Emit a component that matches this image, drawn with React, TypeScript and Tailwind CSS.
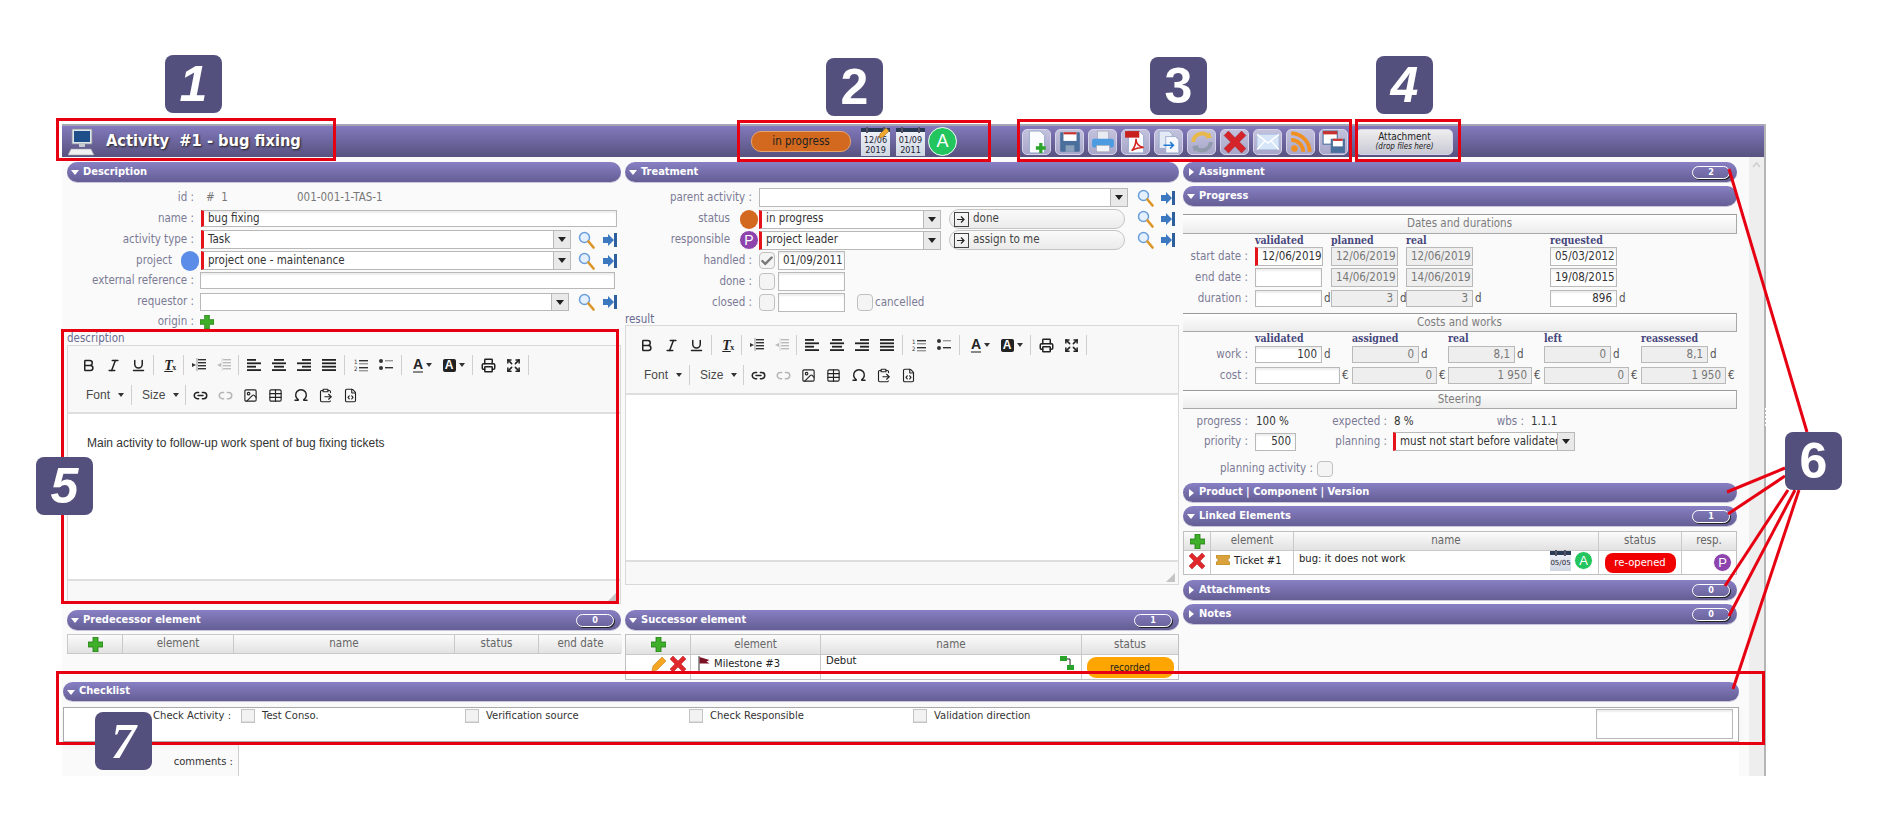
import { ReactNode } from 'react';
import { Bold, Italic, Underline, Printer, Expand, Link2, Unlink2, Image, Table, Omega, ClipboardPaste, FileCode, Check } from 'lucide-react';

const labelCls = 'text-[#7a7a96] text-right whitespace-nowrap';

function Arrow({ open }: { open?: boolean }) {
  return (
    <svg width="8" height="8" viewBox="0 0 8 8" className="shrink-0">
      {open ? <path d="M0 2h8L4 7z" fill="#fff" /> : <path d="M2 0v8l5-4z" fill="#fff" />}
    </svg>
  );
}

function Section({ title, open, badge, h = 20, className = '' }: { title: string; open?: boolean; badge?: string; h?: number; className?: string }) {
  return (
    <div style={{ height: h }} className={`rounded-[10px] bg-gradient-to-b from-[#8880c4] to-[#645e94] flex items-center pl-[4px] text-white font-bold text-[11px] shadow-[0_1px_0_#c8c6dc] ${className}`}>
      <Arrow open={open} />
      <span className="ml-[4px] whitespace-nowrap">{title}</span>
      {badge && (
        <span className="ml-auto mr-[7px] w-[38px] h-[13px] rounded-full border border-white shadow-[1px_1px_0_#222] flex items-center justify-center text-[9px] leading-none">
          {badge}
        </span>
      )}
    </div>
  );
}

function Input({ value = '', w, h = 19, req, right, disabled, className = '' }: { value?: string; w: number; h?: number; req?: boolean; right?: boolean; disabled?: boolean; className?: string }) {
  return (
    <div
      style={{ width: w, height: h }}
      className={`shrink-0 border border-[#b9b9b9] flex items-center px-[4px] whitespace-nowrap overflow-hidden text-[#333] ${disabled ? 'bg-[#eeeeee] text-[#777]' : 'bg-white shadow-[inset_0_2px_2px_#eee]'} ${req ? 'border-l-[3px] border-l-[#e5141a]' : ''} ${right ? 'justify-end' : ''} ${className}`}
    >
      {value}
    </div>
  );
}

function Select({ value = '', w, h = 19, req }: { value?: string; w: number; h?: number; req?: boolean }) {
  return (
    <div style={{ width: w, height: h }} className={`shrink-0 border border-[#b9b9b9] bg-white flex items-center text-[#333] ${req ? 'border-l-[3px] border-l-[#e5141a]' : ''}`}>
      <span className="flex-1 px-[4px] overflow-hidden whitespace-nowrap">{value}</span>
      <span className="w-[17px] h-full bg-[#e9e9e9] border-l border-[#b9b9b9] flex items-center justify-center shrink-0">
        <svg width="8" height="5" viewBox="0 0 8 5"><path d="M0 0h8L4 5z" fill="#222" /></svg>
      </span>
    </div>
  );
}

function Search() {
  return (
    <svg width="17" height="18" viewBox="0 0 17 18" className="shrink-0">
      <circle cx="6.5" cy="6.5" r="5" fill="#e4f0ff" stroke="#6a9fda" strokeWidth="1.5" />
      <path d="M10.5 10.5l5 6" stroke="#dc9526" strokeWidth="2.6" strokeLinecap="round" />
    </svg>
  );
}

function Goto() {
  return (
    <svg width="14" height="14" viewBox="0 0 14 14" className="shrink-0">
      <path d="M0 4h5V1l6 6-6 6v-3H0z" fill="#3b78c0" />
      <rect x="11" y="0" width="3" height="14" fill="#2d5f9e" />
    </svg>
  );
}

function Tools({ gap = 8 }: { gap?: number }) {
  return (
    <span className="flex items-center shrink-0" style={{ gap }}>
      <Search />
      <Goto />
    </span>
  );
}

function Plus({ size = 15 }: { size?: number }) {
  return (
    <svg width={size} height={size} viewBox="0 0 15 15" className="shrink-0">
      <path d="M5 0h5v5h5v5h-5v5H5v-5H0V5h5z" fill="#3fae29" stroke="#237a16" strokeWidth="0.8" />
    </svg>
  );
}

function Cross({ size = 16 }: { size?: number }) {
  return (
    <svg width={size} height={size} viewBox="0 0 16 16" className="shrink-0">
      <path d="M3 0l5 5 5-5 3 3-5 5 5 5-3 3-5-5-5 5-3-3 5-5-5-5z" fill="#e0272b" stroke="#b21a1e" strokeWidth="0.5" />
    </svg>
  );
}

function Avatar({ letter, bg, size = 29, text = 18 }: { letter: string; bg: string; size?: number; text?: number }) {
  return (
    <span
      style={{ width: size, height: size, background: bg, fontSize: text }}
      className="rounded-full border border-white shrink-0 flex items-center justify-center text-white font-['Liberation_Sans',sans-serif]"
    >
      {letter}
    </span>
  );
}

function Calendar({ lines, pen, small }: { lines: string[]; pen?: boolean; small?: boolean }) {
  return (
    <span className={`relative shrink-0 flex flex-col items-center justify-end bg-gradient-to-b from-[#f4f6fa] to-[#cfd7e2] text-[#223] leading-[10px] ${small ? 'w-[21px] h-[20px] text-[7px] pb-[3px]' : 'w-[29px] h-[28px] text-[9px] pb-[1px]'}`}>
      <span className="absolute top-0 left-0 right-0 h-[4px] bg-[#2b3a55]" />
      <span className="absolute top-[-1px] left-[5px] w-[2px] h-[6px] bg-white border-x border-[#556]" />
      <span className="absolute top-[-1px] right-[5px] w-[2px] h-[6px] bg-white border-x border-[#556]" />
      {lines.map((l) => <span key={l}>{l}</span>)}
      {pen && (
        <svg width="12" height="12" viewBox="0 0 12 12" className="absolute -top-[1px] right-0">
          <path d="M1 11l1-4 6-6 3 3-6 6z" fill="#f0a830" stroke="#a8691a" strokeWidth="0.6" />
        </svg>
      )}
    </span>
  );
}

function ToolButton({ children }: { children: ReactNode }) {
  return (
    <span className="w-[29px] h-[26px] rounded-[5px] border border-[#d5d3ea] bg-gradient-to-b from-[#c3c2dd] to-[#a8a6c9] flex items-center justify-center shrink-0">
      <svg width="24" height="24" viewBox="0 0 22 22">{children}</svg>
    </span>
  );
}

const Page = (
  <path d="M4 1h10l4 4v16H4z" fill="#fbfcff" stroke="#8fa2c4" strokeWidth="0.8" />
);

function Bars({ rows }: { rows: [number, number][] }) {
  return (
    <svg width="14" height="14" viewBox="0 0 14 14">
      {rows.map(([x, w], i) => <rect key={i} x={x} y={1 + i * 3.4} width={w} height="1.8" fill="#222" />)}
    </svg>
  );
}

function Btn({ children, w = 25, className = '' }: { children: ReactNode; w?: number; className?: string }) {
  return <span style={{ width: w }} className={`h-[20px] flex items-center justify-center shrink-0 text-[#222] ${className}`}>{children}</span>;
}

function Sep({ m = 2 }: { m?: number }) {
  return <span style={{ marginLeft: m, marginRight: m }} className="w-px h-[20px] bg-[#cfcfcf] shrink-0" />;
}

function Caret() {
  return <svg width="6" height="4" viewBox="0 0 6 4" className="shrink-0"><path d="M0 0h6L3 4z" fill="#333" /></svg>;
}

function IndentIcon({ out }: { out?: boolean }) {
  const c = out ? '#bbb' : '#333';
  return (
    <svg width="14" height="14" viewBox="0 0 14 14">
      {[1, 4, 7, 10].map((y) => <rect key={y} x="6" y={y} width="8" height="1.4" fill={c} />)}
      <rect x="4.5" y="0" width="1" height="13" fill={c} opacity="0.5" />
      <path d={out ? 'M4 5L0 7l4 2z' : 'M0 5l4 2-4 2z'} fill={c} />
    </svg>
  );
}

function EditorToolbar({ h }: { h: number }) {
  const ic = { size: 15, strokeWidth: 2.4 };
  const ig = { size: 15, strokeWidth: 1.8 };
  return (
    <div style={{ height: h }} className="bg-[#f8f8f8] border-b-2 border-[#dedede] pl-[8px] pt-[9px]">
      <div className="flex items-center h-[20px]">
        <Btn><Bold {...ic} /></Btn>
        <Btn><Italic {...ic} /></Btn>
        <Btn><Underline {...ic} /></Btn>
        <Sep />
        <Btn><span className="relative italic font-bold text-[14px] font-['Liberation_Serif',serif] underline">T<span className="absolute left-[8px] top-[7px] text-[8px] not-italic no-underline">x</span></span></Btn>
        <Sep />
        <Btn><IndentIcon /></Btn>
        <Btn><IndentIcon out /></Btn>
        <Sep />
        <Btn><Bars rows={[[0, 9], [0, 14], [0, 9], [0, 14]]} /></Btn>
        <Btn><Bars rows={[[2, 10], [0, 14], [2, 10], [0, 14]]} /></Btn>
        <Btn><Bars rows={[[5, 9], [0, 14], [5, 9], [0, 14]]} /></Btn>
        <Btn><Bars rows={[[0, 14], [0, 14], [0, 14], [0, 14]]} /></Btn>
        <Sep m={3} />
        <Btn>
          <svg width="14" height="14" viewBox="0 0 14 14">
            <text x="0" y="6" fontSize="6" fill="#333">1</text>
            <text x="0" y="13" fontSize="6" fill="#333">2</text>
            <rect x="5" y="2" width="9" height="1.4" fill="#333" />
            <rect x="5" y="5" width="9" height="1.4" fill="#999" />
            <rect x="5" y="9" width="9" height="1.4" fill="#333" />
            <rect x="5" y="12" width="9" height="1.4" fill="#999" />
          </svg>
        </Btn>
        <Btn>
          <svg width="14" height="14" viewBox="0 0 14 14">
            <circle cx="2" cy="3" r="2" fill="#333" />
            <circle cx="2" cy="10" r="2" fill="#333" />
            <rect x="6" y="2" width="8" height="1.4" fill="#999" />
            <rect x="6" y="9" width="8" height="1.4" fill="#333" />
          </svg>
        </Btn>
        <Sep m={3} />
        <Btn w={33} className="gap-[3px] pl-[2px]">
          <span className="font-bold text-[14px] leading-[13px] border-b-2 border-[#888] font-['Liberation_Sans',sans-serif]">A</span>
          <Caret />
        </Btn>
        <Btn w={31} className="gap-[3px]">
          <span className="bg-[#222] text-white rounded-[2px] font-bold text-[12px] leading-[13px] w-[13px] text-center font-['Liberation_Sans',sans-serif]">A</span>
          <Caret />
        </Btn>
        <Sep m={3} />
        <Btn><Printer {...ic} /></Btn>
        <Btn><Expand {...ic} /></Btn>
        <Sep />
      </div>
      <div className="flex items-center h-[20px] mt-[10px] text-[12px] text-[#484848] font-['Liberation_Sans',sans-serif]">
        <span className="w-[53px] pl-[10px] flex items-center gap-[8px] shrink-0">Font <Caret /></span>
        <Sep />
        <span className="w-[49px] pl-[8px] flex items-center gap-[8px] shrink-0">Size <Caret /></span>
        <Sep />
        <Btn><Link2 {...ic} /></Btn>
        <Btn className="opacity-30"><Unlink2 {...ic} /></Btn>
        <Btn><Image {...ig} /></Btn>
        <Btn><Table {...ig} /></Btn>
        <Btn><Omega size={16} strokeWidth={2.2} /></Btn>
        <Btn><ClipboardPaste {...ig} /></Btn>
        <Btn><FileCode {...ig} /></Btn>
      </div>
    </div>
  );
}

function Editor({ text, toolbarH, bodyH, footH }: { text?: string; toolbarH: number; bodyH: number; footH: number }) {
  return (
    <div className="border border-[#d9d9d9] bg-[#f8f8f8]">
      <EditorToolbar h={toolbarH} />
      <div style={{ height: bodyH }} className="bg-white pl-[19px] pt-[20px] text-[12px] text-[#333] font-['Liberation_Sans',sans-serif]">{text}</div>
      <div style={{ height: footH }} className="relative border-t-2 border-[#dedede] bg-[#f8f8f8]">
        <span className="absolute right-[3px] bottom-[2px] w-0 h-0 border-l-[9px] border-l-transparent border-b-[9px] border-b-[#c4c4c4]" />
      </div>
    </div>
  );
}

function Checkbox({ checked, size = 16, h }: { checked?: boolean; size?: number; h?: number }) {
  return (
    <span style={{ width: size, height: h ?? size }} className="shrink-0 rounded-[4px] border border-[#c0c0c0] bg-[#f4f4f4] flex items-center justify-center">
      {checked && <Check size={14} strokeWidth={4} className="text-[#777]" />}
    </span>
  );
}

function Transition({ label }: { label: string }) {
  return (
    <div className="w-[176px] h-[20px] rounded-[10px] border border-[#c4c4c4] bg-gradient-to-b from-[#fafafa] to-[#ebebeb] flex items-center pl-[4px] gap-[4px] shrink-0 text-[#444]">
      <svg width="15" height="15" viewBox="0 0 15 15">
        <rect x="0.5" y="0.5" width="14" height="14" fill="none" stroke="#444" />
        <path d="M3 7.5h6M7 4.5l3 3-3 3" stroke="#222" strokeWidth="1.2" fill="none" />
      </svg>
      {label}
    </div>
  );
}

function Band({ title, h = 20, className = '' }: { title: string; h?: number; className?: string }) {
  return (
    <div style={{ height: h }} className={`border-t border-b border-r border-[#a8a8a8] border-t-[#999] bg-gradient-to-b from-white to-[#ececec] flex items-center justify-center text-[#7d7d7d] ${className}`}>
      {title}
    </div>
  );
}

function Th({ children, className = '' }: { children?: ReactNode; className?: string }) {
  return <div className={`flex items-center justify-center border-r border-[#c9c9c9] text-[#666] bg-gradient-to-b from-[#fbfbfb] to-[#e2e2e2] h-full ${className}`}>{children}</div>;
}

function DescriptionCol() {
  return (
    <div className="w-[554px] shrink-0">
      <Section title="Description" open />
      <div className="flex h-[14px] mt-[9px] items-center">
        <span className={`${labelCls} w-[127px]`}>id :</span>
        <span className="ml-[12px] w-[91px] text-[#777]">#&nbsp;&nbsp;1</span>
        <span className="text-[#777]">001-001-1-TAS-1</span>
      </div>
      <div className="flex items-center mt-[5px] h-[17px]">
        <span className={`${labelCls} w-[127px]`}>name :</span>
        <Input w={416} h={17} req value="bug fixing" className="ml-[7px]" />
      </div>
      <div className="flex items-center mt-[3px] h-[19px]">
        <span className={`${labelCls} w-[127px]`}>activity type :</span>
        <div className="ml-[7px]"><Select w={370} req value="Task" /></div>
        <span className="ml-[7px]"><Tools /></span>
      </div>
      <div className="flex items-center mt-[2px] h-[19px]">
        <span className={`${labelCls} w-[105px]`}>project</span>
        <span className="ml-[9px] w-[18px] h-[20px] rounded-full bg-[#5b8de8] shrink-0" />
        <div className="ml-[2px]"><Select w={370} req value="project one - maintenance" /></div>
        <span className="ml-[7px]"><Tools /></span>
      </div>
      <div className="flex items-center mt-[2px] h-[17px]">
        <span className={`${labelCls} w-[127px]`}>external reference :</span>
        <Input w={415} h={17} className="ml-[6px]" />
      </div>
      <div className="flex items-center mt-[4px] h-[18px]">
        <span className={`${labelCls} w-[127px]`}>requestor :</span>
        <div className="ml-[6px]"><Select w={369} h={18} /></div>
        <span className="ml-[9px]"><Tools /></span>
      </div>
      <div className="flex items-center mt-[5px] h-[12px]">
        <span className={`${labelCls} w-[127px]`}>origin :</span>
        <span className="ml-[6px]"><Plus size={14} /></span>
      </div>
      <div className="mt-[4px] h-[13px] leading-[13px] text-[#6a6a90]">description</div>
      <Editor text="Main activity to follow-up work spent of bug fixing tickets" toolbarH={68} bodyH={165} footH={24} />
      <Section title="Predecessor element" open badge="0" className="mt-[6px]" />
      <div className="mt-[4px] h-[20px] grid grid-cols-[55px_111px_221px_84px_83px] border border-[#c9c9c9]">
        <Th><Plus /></Th>
        <Th>element</Th>
        <Th>name</Th>
        <Th>status</Th>
        <Th className="border-r-0">end date</Th>
      </div>
    </div>
  );
}

function TreatmentCol() {
  return (
    <div className="w-[554px] shrink-0">
      <Section title="Treatment" open />
      <div className="flex items-center mt-[6px] h-[19px]">
        <span className={`${labelCls} w-[127px]`}>parent activity :</span>
        <div className="ml-[7px]"><Select w={369} /></div>
        <span className="ml-[9px]"><Tools gap={7} /></span>
      </div>
      <div className="flex items-center mt-[2px] h-[20px]">
        <span className={`${labelCls} w-[105px]`}>status</span>
        <span className="ml-[10px] w-[18px] h-[19px] rounded-full bg-[#d2691e] shrink-0" />
        <div className="ml-[1px]"><Select w={182} req value="in progress" /></div>
        <span className="ml-[8px]"><Transition label="done" /></span>
        <span className="ml-[12px]"><Tools gap={7} /></span>
      </div>
      <div className="flex items-center mt-[1px] h-[20px]">
        <span className={`${labelCls} w-[105px]`}>responsible</span>
        <span className="ml-[9px]"><Avatar letter="P" bg="#8e44ad" size={20} text={14} /></span>
        <div className="ml-[0px]"><Select w={182} req value="project leader" /></div>
        <span className="ml-[8px]"><Transition label="assign to me" /></span>
        <span className="ml-[12px]"><Tools gap={7} /></span>
      </div>
      <div className="flex items-center mt-[1px] h-[19px]">
        <span className={`${labelCls} w-[127px] text-[#5f5f8f]`}>handled :</span>
        <span className="ml-[7px]"><Checkbox checked h={17} /></span>
        <Input w={67} value="01/09/2011" className="ml-[3px]" />
      </div>
      <div className="flex items-center mt-[2px] h-[19px]">
        <span className={`${labelCls} w-[127px]`}>done :</span>
        <span className="ml-[7px]"><Checkbox h={17} /></span>
        <Input w={67} className="ml-[3px]" />
      </div>
      <div className="flex items-center mt-[2px] h-[19px]">
        <span className={`${labelCls} w-[127px]`}>closed :</span>
        <span className="ml-[7px]"><Checkbox h={17} /></span>
        <Input w={67} className="ml-[3px]" />
        <span className="ml-[12px]"><Checkbox h={17} /></span>
        <span className="ml-[2px] text-[#7a7a96]">cancelled</span>
      </div>
      <div className="mt-[1px] h-[12px] leading-[12px] text-[#6a6a90]">result</div>
      <Editor toolbarH={69} bodyH={165} footH={24} />
      <Section title="Successor element" open badge="1" className="mt-[25px]" />
      <div className="mt-[4px] border border-[#c0c0c0] bg-white">
        <div className="h-[20px] grid grid-cols-[65px_130px_261px_96px] border-b border-[#c9c9c9]">
          <Th><Plus /></Th>
          <Th>element</Th>
          <Th>name</Th>
          <Th className="border-r-0">status</Th>
        </div>
        <div className="h-[24px] grid grid-cols-[65px_130px_261px_96px] text-[10px] text-[#222] font-stretch-normal">
          <div className="flex items-start pt-[1px] justify-end pr-[4px] gap-[3px] border-r border-[#c9c9c9]">
            <svg width="16" height="16" viewBox="0 0 16 16"><path d="M1 15l1-5L11 1l4 4-9 9z" fill="#f5a623" stroke="#c77d16" strokeWidth="0.6" /></svg>
            <Cross />
          </div>
          <div className="flex items-start pt-[1px] pl-[7px] gap-[4px] border-r border-[#c9c9c9]">
            <svg width="12" height="16" viewBox="0 0 12 16"><path d="M1 0v16" stroke="#333" /><path d="M1.5 1l10 3-3 1.5 3 2-10 0z" fill="#7a1224" /></svg>
            <span>Milestone #3</span>
          </div>
          <div className="flex items-start justify-between pl-[5px] pr-[7px] leading-[12px] border-r border-[#c9c9c9]">
            <span>Debut</span>
            <svg width="14" height="14" viewBox="0 0 14 14" className="mt-[1px]">
              <rect x="0" y="0" width="7" height="5" fill="#29a329" /><rect x="7" y="9" width="7" height="5" fill="#29a329" />
              <path d="M7 3h3v6" stroke="#222" fill="none" />
            </svg>
          </div>
          <div className="flex items-center justify-center">
            <span className="w-[87px] h-[21px] rounded-[9px] bg-[#ffa500] flex items-center justify-center text-[#222] font-stretch-condensed">recorded</span>
          </div>
        </div>
      </div>
    </div>
  );
}

function ProgressCol() {
  const dates = 'grid grid-cols-[72px_76px_75px_144px_1fr]';
  const costs = 'grid grid-cols-[72px_97px_96px_96px_97px_1fr]';
  const head = 'font-bold text-[#46467c] leading-[13px] font-["DejaVu_Serif",serif] text-[10.5px]';
  const Unit = ({ u }: { u: string }) => <span className="ml-[2px] text-[#555]">{u}</span>;
  return (
    <div className="w-[554px] shrink-0">
      <Section title="Assignment" badge="2" />
      <Section title="Progress" open className="mt-[4px]" />
      <Band title="Dates and durations" className="mt-[8px]" />
      <div className={`${dates} h-[13px] ${head}`}>
        <span /><span>validated</span><span>planned</span><span>real</span><span>requested</span>
      </div>
      <div className={`${dates} items-center h-[19px]`}>
        <span className={`${labelCls} pr-[7px]`}>start date :</span>
        <Input w={68} req value="12/06/2019" />
        <Input w={67} disabled value="12/06/2019" />
        <Input w={67} disabled value="12/06/2019" />
        <Input w={67} value="05/03/2012" />
      </div>
      <div className={`${dates} items-center mt-[2px] h-[19px]`}>
        <span className={`${labelCls} pr-[7px]`}>end date :</span>
        <Input w={67} />
        <Input w={67} disabled value="14/06/2019" />
        <Input w={67} disabled value="14/06/2019" />
        <Input w={67} value="19/08/2015" />
      </div>
      <div className={`${dates} items-center mt-[3px] h-[17px]`}>
        <span className={`${labelCls} pr-[7px]`}>duration :</span>
        <span className="flex items-center"><Input w={67} h={17} /><Unit u="d" /></span>
        <span className="flex items-center"><Input w={67} h={17} disabled right value="3" /><Unit u="d" /></span>
        <span className="flex items-center"><Input w={67} h={17} disabled right value="3" /><Unit u="d" /></span>
        <span className="flex items-center"><Input w={67} h={17} right value="896" /><Unit u="d" /></span>
      </div>
      <Band title="Costs and works" h={19} className="mt-[6px]" />
      <div className={`${costs} h-[14px] ${head}`}>
        <span /><span>validated</span><span>assigned</span><span>real</span><span>left</span><span>reassessed</span>
      </div>
      <div className={`${costs} items-center h-[17px]`}>
        <span className={`${labelCls} pr-[7px]`}>work :</span>
        <span className="flex items-center"><Input w={67} h={17} right value="100" /><Unit u="d" /></span>
        <span className="flex items-center"><Input w={67} h={17} disabled right value="0" /><Unit u="d" /></span>
        <span className="flex items-center"><Input w={67} h={17} disabled right value="8,1" /><Unit u="d" /></span>
        <span className="flex items-center"><Input w={67} h={17} disabled right value="0" /><Unit u="d" /></span>
        <span className="flex items-center"><Input w={67} h={17} disabled right value="8,1" /><Unit u="d" /></span>
      </div>
      <div className={`${costs} items-center mt-[4px] h-[17px]`}>
        <span className={`${labelCls} pr-[7px]`}>cost :</span>
        <span className="flex items-center"><Input w={85} h={17} /><Unit u="€" /></span>
        <span className="flex items-center"><Input w={85} h={17} disabled right value="0" /><Unit u="€" /></span>
        <span className="flex items-center"><Input w={84} h={17} disabled right value="1 950" /><Unit u="€" /></span>
        <span className="flex items-center"><Input w={85} h={17} disabled right value="0" /><Unit u="€" /></span>
        <span className="flex items-center"><Input w={85} h={17} disabled right value="1 950" /><Unit u="€" /></span>
      </div>
      <Band title="Steering" h={19} className="mt-[6px]" />
      <div className="flex items-center h-[13px] mt-[6px] text-[#333]">
        <span className={`${labelCls} w-[65px]`}>progress :</span>
        <span className="ml-[8px] w-[61px]">100 %</span>
        <span className={`${labelCls} w-[70px]`}>expected :</span>
        <span className="ml-[7px] w-[30px]">8 %</span>
        <span className={`${labelCls} w-[100px]`}>wbs :</span>
        <span className="ml-[7px]">1.1.1</span>
      </div>
      <div className="flex items-center h-[19px] mt-[4px]">
        <span className={`${labelCls} w-[65px]`}>priority :</span>
        <Input w={41} h={18} right value="500" className="ml-[7px]" />
        <span className={`${labelCls} w-[91px]`}>planning :</span>
        <div className="ml-[6px]"><Select w={182} req value="must not start before validated" /></div>
      </div>
      <div className="flex items-center h-[16px] mt-[10px]">
        <span className={`${labelCls} w-[130px]`}>planning activity :</span>
        <span className="ml-[4px]"><Checkbox /></span>
      </div>
      <Section title="Product | Component | Version" h={19} className="mt-[6px]" />
      <Section title="Linked Elements" open badge="1" className="mt-[4px]" />
      <div className="mt-[5px] border border-[#c0c0c0] bg-white">
        <div className="h-[19px] grid grid-cols-[27px_83px_305px_83px_54px] border-b border-[#c9c9c9]">
          <Th><Plus /></Th>
          <Th>element</Th>
          <Th>name</Th>
          <Th>status</Th>
          <Th className="border-r-0">resp.</Th>
        </div>
        <div className="h-[23px] grid grid-cols-[27px_83px_305px_83px_54px] text-[10px] text-[#222] font-stretch-normal">
          <div className="flex justify-center pt-[2px] border-r border-[#c9c9c9]"><Cross /></div>
          <div className="flex items-start pt-[2px] pl-[5px] gap-[4px] border-r border-[#c9c9c9]">
            <svg width="14" height="10" viewBox="0 0 14 10" className="mt-[2px]"><path d="M0 0h14v3a2 2 0 000 4v3H0V7a2 2 0 000-4z" fill="#d9a23a" stroke="#a97d25" strokeWidth="0.5" /></svg>
            <span className="whitespace-nowrap">Ticket #1</span>
          </div>
          <div className="flex items-start pl-[5px] pr-[5px] border-r border-[#c9c9c9]">
            <span className="flex-1">bug: it does not work</span>
            <Calendar small lines={['05/05']} />
            <span className="ml-[3px]"><Avatar letter="A" bg="#22c55e" size={19} text={13} /></span>
          </div>
          <div className="flex items-center justify-center border-r border-[#c9c9c9]">
            <span className="w-[71px] h-[20px] rounded-[8px] bg-[#f00000] text-white flex items-center justify-center">re-opened</span>
          </div>
          <div className="flex items-center justify-end pr-[4px]"><Avatar letter="P" bg="#8e44ad" size={19} text={13} /></div>
        </div>
      </div>
      <Section title="Attachments" badge="0" className="mt-[5px]" />
      <Section title="Notes" badge="0" className="mt-[4px]" />
    </div>
  );
}

function CheckItem({ label }: { label: string }) {
  return (
    <div className="w-[224px] shrink-0 flex items-start gap-[7px]">
      <span className="w-[14px] h-[14px] border border-[#c4c4c4] bg-[#f2f2f2] shadow-[inset_0_-1px_0_#ddd] shrink-0" />
      <span className="text-[10px] text-[#333] leading-[14px] font-stretch-normal">{label}</span>
    </div>
  );
}

function Tag({ n, className }: { n: string; className: string }) {
  return (
    <div className={`absolute w-[57px] h-[58px] rounded-[8px] bg-[#54507d] flex items-center justify-center text-white font-bold text-[50px] leading-none font-['Liberation_Sans',sans-serif] ${className}`}>
      {n}
    </div>
  );
}

function RedBox({ className }: { className: string }) {
  return <div className={`absolute border-[3px] border-[#e60012] pointer-events-none ${className}`} />;
}

const lines = [
  [1729, 169, 1807, 432],
  [1727, 492, 1785, 468],
  [1728, 514, 1785, 476],
  [1725, 586, 1788, 490],
  [1729, 616, 1795, 490],
  [1733, 689, 1799, 490],
];

export default function App() {
  return (
    <div className="relative w-[1894px] h-[839px] bg-white overflow-hidden text-[11.5px] text-[#333] font-['DejaVu_Sans',sans-serif] font-stretch-condensed">
      <div className="ml-[62px] pt-[124px]">
        <div className="w-[1704px] h-[652px] border-r-2 border-[#b5b5b5] flex flex-col">
          <div className="h-[33px] shrink-0 flex items-center pl-[6px] border-t-2 border-[#a6a5b5] bg-gradient-to-b from-[#8379bd] to-[#57527f]">
            <svg width="28" height="28" viewBox="0 0 28 28" className="shrink-0">
              <rect x="4" y="1" width="20" height="15" fill="#dfe5ea" stroke="#8a8f98" strokeWidth="0.8" />
              <rect x="6" y="3" width="16" height="11" fill="#1f4f8a" />
              <rect x="11" y="16" width="6" height="3" fill="#c5cad0" />
              <path d="M3 21h20l3 6H0z" fill="#eef0f2" stroke="#9aa0a8" strokeWidth="0.6" />
            </svg>
            <div className="ml-[10px] w-[645px] shrink-0 text-white font-bold text-[16.3px] whitespace-pre [text-shadow:1px_1px_2px_#222]">
              Activity  #1 - bug fixing
            </div>
            <span className="w-[100px] h-[21px] rounded-[10px] border border-[#e6a46f] bg-[#d2691e] flex items-center justify-center text-[#222] shrink-0">in progress</span>
            <span className="ml-[10px]"><Calendar pen lines={['12/06', '2019']} /></span>
            <span className="ml-[6px]"><Calendar lines={['01/09', '2011']} /></span>
            <span className="ml-[3px]"><Avatar letter="A" bg="#22c55e" /></span>
            <div className="ml-[65px] flex gap-[4px]">
              <ToolButton>{Page}<path d="M13 12h3v3h3v3h-3v3h-3v-3h-3v-3h3z" fill="#2aa52a" /></ToolButton>
              <ToolButton><rect x="2" y="2" width="18" height="18" rx="1" fill="#4a6f9c" /><rect x="5" y="2" width="12" height="8" fill="#fff" /><rect x="5" y="2" width="12" height="2" fill="#c8322e" /><rect x="7" y="14" width="8" height="6" fill="#8aa0bb" /></ToolButton>
              <ToolButton><rect x="6" y="1" width="10" height="8" fill="#e8ecf2" stroke="#99a" strokeWidth="0.5" /><rect x="1" y="8" width="20" height="8" rx="2" fill="#4c9be0" /><rect x="5" y="14" width="12" height="6" fill="#f2f4f7" stroke="#99a" strokeWidth="0.5" /></ToolButton>
              <ToolButton>{Page}<rect x="1" y="1" width="13" height="6" fill="#c8201c" /><path d="M7 19c3-3 4-7 4-11 0 4 2 7 7 8-4 0-8 1-11 3z" fill="none" stroke="#d3231e" strokeWidth="1.4" /></ToolButton>
              <ToolButton><path d="M2 1h9l3 3v13H2z" fill="#e3e9f5" stroke="#8fa2c4" strokeWidth="0.7" /><path d="M8 6h9l3 3v12H8z" fill="#f6f8fd" stroke="#8fa2c4" strokeWidth="0.7" /><path d="M6 14h8M12 11l3 3-3 3" stroke="#1f78d1" strokeWidth="1.5" fill="none" /></ToolButton>
              <ToolButton><path d="M3 11a8 8 0 0114-5" stroke="#e8b84a" strokeWidth="3.5" fill="none" /><path d="M14 8l6-1-2-5z" fill="#e8b84a" /><path d="M19 11a8 8 0 01-14 5" stroke="#8f9bab" strokeWidth="3.5" fill="none" /><path d="M8 14l-6 1 2 5z" fill="#8f9bab" /></ToolButton>
              <ToolButton><path d="M5 1l6 6 6-6 4 4-6 6 6 6-4 4-6-6-6 6-4-4 6-6-6-6z" fill="#d4242a" stroke="#9c1a1e" strokeWidth="0.4" /></ToolButton>
              <ToolButton><rect x="1" y="4" width="20" height="14" fill="#d7e5f8" stroke="#a9c0e0" strokeWidth="0.6" /><path d="M1 4l10 8 10-8M1 18l7-8M21 18l-7-8" stroke="#fff" strokeWidth="1.3" fill="none" /></ToolButton>
              <ToolButton><circle cx="5" cy="17" r="3" fill="#f19020" /><path d="M2 9a11 11 0 0111 11M2 3a17 17 0 0117 17" stroke="#f19020" strokeWidth="3.4" fill="none" /></ToolButton>
              <ToolButton><rect x="1" y="1" width="13" height="12" fill="#fff" stroke="#4a6f9c" /><rect x="1" y="1" width="13" height="3" fill="#c8322e" /><rect x="8" y="8" width="13" height="13" fill="#4a6f9c" /><rect x="10" y="8" width="9" height="7" fill="#fff" /><rect x="10" y="8" width="9" height="2" fill="#c8322e" /></ToolButton>
            </div>
            <div className="ml-[8px] w-[97px] h-[26px] rounded-[5px] border border-[#d5d3ea] bg-gradient-to-b from-[#eeeeee] to-[#c9c9d6] flex flex-col items-center justify-center text-[#222] text-[10px] leading-[10px] shrink-0">
              <span>Attachment</span>
              <span className="italic text-[8px] leading-[9px]">(drop files here)</span>
            </div>
          </div>
          <div className="flex flex-1 min-h-0">
            <div className="w-[1688px] bg-[#fafafa]">
              <div className="h-[525px] flex gap-[4px] pl-[5px] pt-[5px]">
                <DescriptionCol />
                <TreatmentCol />
                <ProgressCol />
              </div>
              <div className="ml-[1px] w-[1676px]">
                <Section title="Checklist" open h={19} />
                <div className="mt-[6px] h-[35px] bg-white border border-[#aaaaaa] flex items-start pt-[1px] shadow-[0_4px_6px_#eee]">
                  <span className="w-[167px] text-right text-[10px] text-[#333] leading-[13px] whitespace-nowrap font-stretch-normal">Check Activity :</span>
                  <div className="ml-[10px] flex">
                    <CheckItem label="Test Conso." />
                    <CheckItem label="Verification source" />
                    <CheckItem label="Check Responsible" />
                    <CheckItem label="Validation direction" />
                  </div>
                  <Input w={137} h={30} className="ml-auto mr-[5px]" />
                </div>
                <div className="mt-[3px] h-[31px] flex">
                  <div className="w-[175px] pr-[5px] pt-[9px] text-right text-[10px] text-[#333] font-stretch-normal">comments :</div>
                  <div className="flex-1 bg-white border-l border-[#cfcfcf]" />
                </div>
              </div>
            </div>
            <div className="w-[15px] bg-[#eeeeee] flex justify-center pt-[5px]">
              <svg width="9" height="6" viewBox="0 0 9 6"><path d="M1 5l3.5-4L8 5" stroke="#cfcfcf" strokeWidth="1.6" fill="none" /></svg>
            </div>
          </div>
        </div>
      </div>

      <div className="absolute left-[1765px] top-[408px] w-[2px] h-[18px] border-l-2 border-dotted border-white" />

      <RedBox className="left-[56px] top-[118px] w-[280px] h-[43px]" />
      <RedBox className="left-[737px] top-[120px] w-[254px] h-[42px]" />
      <RedBox className="left-[1017px] top-[119px] w-[335px] h-[43px]" />
      <RedBox className="left-[1355px] top-[119px] w-[106px] h-[43px]" />
      <RedBox className="left-[61px] top-[329px] w-[558px] h-[275px]" />
      <RedBox className="left-[56px] top-[671px] w-[1709px] h-[74px]" />

      <svg width="1894" height="839" className="absolute left-0 top-0 pointer-events-none">
        {lines.map((l, i) => <line key={i} x1={l[0]} y1={l[1]} x2={l[2]} y2={l[3]} stroke="#e60012" strokeWidth="3" />)}
      </svg>

      <Tag n="1" className="left-[165px] top-[55px] italic" />
      <Tag n="2" className="left-[826px] top-[58px]" />
      <Tag n="3" className="left-[1150px] top-[57px]" />
      <Tag n="4" className="left-[1376px] top-[56px] italic" />
      <Tag n="5" className="left-[36px] top-[457px] italic" />
      <Tag n="6" className="left-[1785px] top-[432px]" />
      <Tag n="7" className="left-[95px] top-[712px] italic font-['Liberation_Serif',serif]" />
    </div>
  );
}
